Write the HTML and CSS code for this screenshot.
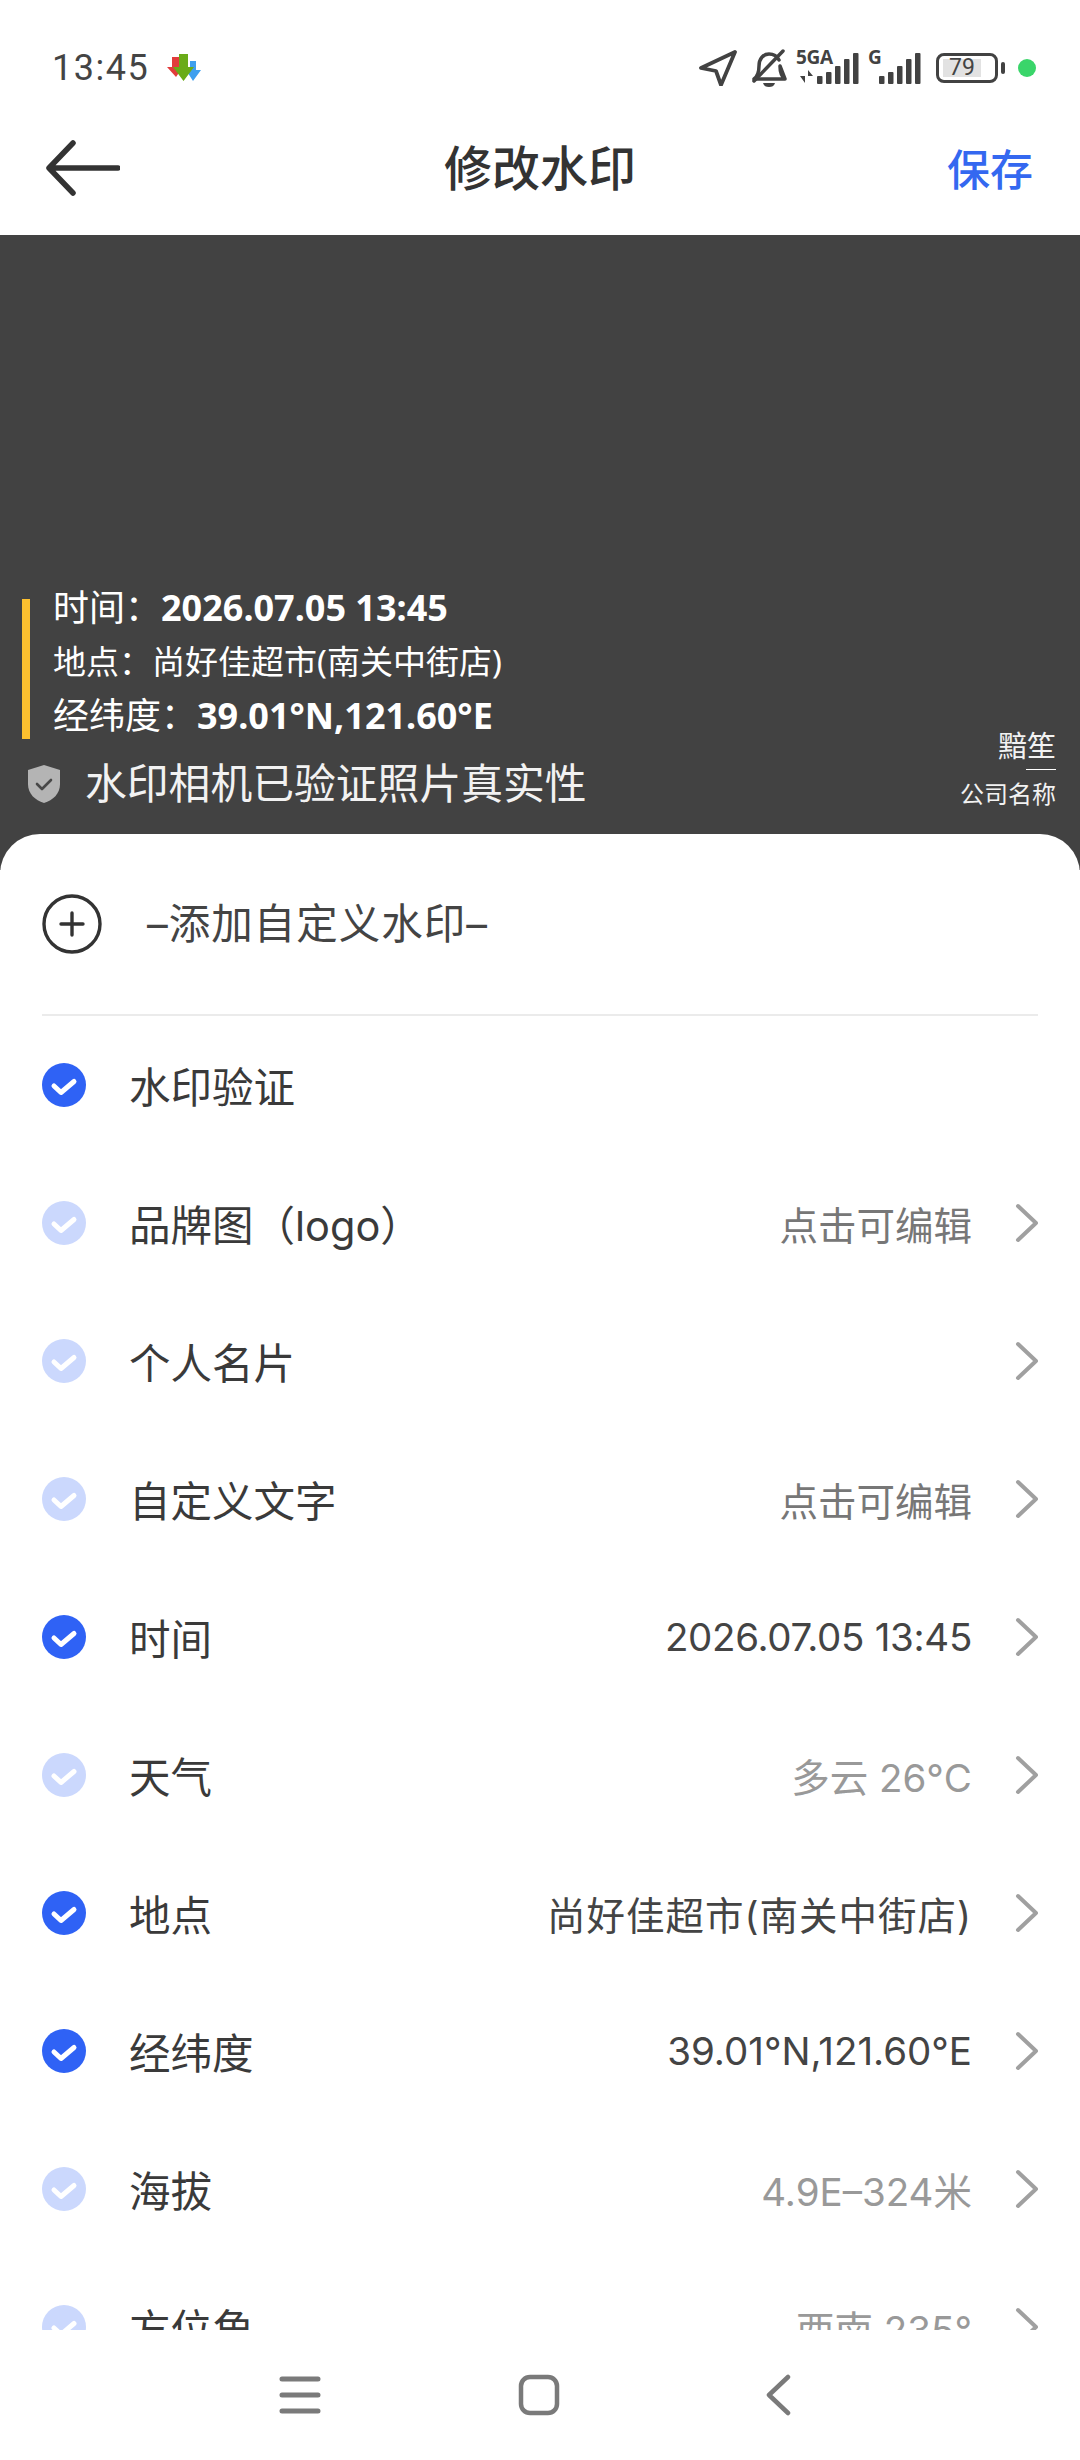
FILE: index.html
```html
<!DOCTYPE html>
<html lang="zh-CN">
<head>
    <meta charset="UTF-8">
    <meta name="viewport" content="width=device-width, initial-scale=1.0">
    <title>修改水印</title>
    <link rel="stylesheet" href="styles.css">
</head>
<body>
    <svg class="defs" width="0" height="0">
        <symbol id="check" viewBox="0 0 44 44">
            <circle cx="22" cy="22" r="22" fill="currentColor"/>
            <path d="M12 23l7 6.500 13-11" fill="none" stroke="#fff" stroke-width="5" stroke-linecap="round" stroke-linejoin="round"/>
        </symbol>
        <symbol id="chevron" viewBox="0 0 24 40">
            <path d="M4 3l18 17-18 17" fill="none" stroke="#a0a0a0" stroke-width="4" stroke-linecap="round" stroke-linejoin="round"/>
        </symbol>
    </svg>

    <div class="page">
        <div class="status-bar">
            <span class="clock">13:45</span>
            <svg class="dl-icon" width="36" height="30" viewBox="0 0 36 30">
                <path d="M6 4h7v10h4l-7 10-9-10h5z" fill="#e23c3c"/>
                <path d="M24 8h6v9h5l-8 11-7-11h4z" fill="#3f9fee"/>
                <path d="M13 1h9v13h6L17.500 28 7 14h6z" fill="#6aab18"/>
            </svg>
            <div class="status-right">
                <svg width="38" height="36" viewBox="0 0 38 36">
                    <path d="M36 2L2 18l15 3 5 14z" fill="none" stroke="#424242" stroke-width="3.800" stroke-linejoin="round"/>
                </svg>
                <svg class="bell" width="36" height="40" viewBox="0 0 36 40">
                    <path d="M3 31c4-3 5-7 5-13 0-7 4-12 10-12 5 0 8 2 10 6M29 18c0 6 1 10 5 13z M3 31h31" fill="none" stroke="#424242" stroke-width="3.500" stroke-linecap="round" stroke-linejoin="round"/>
                    <path d="M12 35h12c-1 3-3 4-6 4s-5-1-6-4z" fill="#424242"/>
                    <path d="M3 33L32 3" stroke="#424242" stroke-width="3.500" stroke-linecap="round"/>
                </svg>
                <div class="signal sim-one">
                    <span class="net-label">5GA</span>
                    <svg width="66" height="36" viewBox="0 0 66 36">
                        <path d="M9 20v13l-5-7h5zM12 33V20l5 6h-5z"/>
                        <rect x="21" y="26" width="5.500" height="8" rx="1"/>
                        <rect x="30" y="22" width="5.500" height="12" rx="1"/>
                        <rect x="39" y="16" width="5.500" height="18" rx="1"/>
                        <rect x="48" y="9" width="5.500" height="25" rx="1"/>
                        <rect x="57" y="3" width="5.500" height="31" rx="1"/>
                    </svg>
                </div>
                <div class="signal sim-two">
                    <span class="net-label">G</span>
                    <svg width="54" height="36" viewBox="0 0 54 36">
                        <rect x="11" y="26" width="5.500" height="8" rx="1"/>
                        <rect x="20" y="22" width="5.500" height="12" rx="1"/>
                        <rect x="29" y="16" width="5.500" height="18" rx="1"/>
                        <rect x="38" y="9" width="5.500" height="25" rx="1"/>
                        <rect x="47" y="3" width="5.500" height="31" rx="1"/>
                    </svg>
                </div>
                <div class="battery">
                    <div class="battery-body"><span class="battery-level">79</span></div>
                    <div class="battery-nub"></div>
                </div>
                <span class="dot"></span>
            </div>
        </div>

        <header class="top-bar">
            <svg class="back" width="74" height="60" viewBox="0 0 74 60">
                <path d="M72 30H4M27 5L3 30l24 25" fill="none" stroke="#333" stroke-width="5.500" stroke-linecap="round" stroke-linejoin="round"/>
            </svg>
            <h1>修改水印</h1>
            <a class="save">保存</a>
        </header>

        <section class="preview">
            <div class="wm-left">
                <div class="wm-lines">
                    <div class="wm-line wm-time">时间：<b>2026.07.05 13:45</b></div>
                    <div class="wm-line wm-place">地点：尚好佳超市(南关中街店)</div>
                    <div class="wm-line wm-time">经纬度：<b>39.01°N,121.60°E</b></div>
                </div>
                <div class="wm-verify">
                    <svg width="34" height="40" viewBox="0 0 34 40">
                        <path d="M17 1l16 5v14c0 10-7 16-16 19C8 36 1 30 1 20V6z" fill="#b4b4b4"/>
                        <path d="M10 20l5 5 9-9" fill="none" stroke="#484848" stroke-width="2.600" stroke-linecap="round" stroke-linejoin="round"/>
                    </svg>
                    <span>水印相机已验证照片真实性</span>
                </div>
            </div>
            <div class="wm-company">
                <div class="wm-name">黯笙</div>
                <div class="wm-rule"></div>
                <div class="wm-company-label">公司名称</div>
            </div>
        </section>

        <main class="sheet">
            <div class="add-row">
                <svg width="60" height="60" viewBox="0 0 60 60">
                    <circle cx="30" cy="30" r="28" fill="none" stroke="#333" stroke-width="3.400"/>
                    <path d="M30 19v22M19 30h22" stroke="#333" stroke-width="3.400" stroke-linecap="round"/>
                </svg>
                <span class="add-text">–添加自定义水印–</span>
            </div>

            <ul class="list">
                <li class="row on">
                    <svg class="tick"><use href="#check"/></svg>
                    <span class="label">水印验证</span>
                </li>
                <li class="row">
                    <svg class="tick"><use href="#check"/></svg>
                    <span class="label">品牌图（logo）</span>
                    <span class="value hint">点击可编辑</span>
                    <svg class="chev"><use href="#chevron"/></svg>
                </li>
                <li class="row">
                    <svg class="tick"><use href="#check"/></svg>
                    <span class="label">个人名片</span>
                    <svg class="chev"><use href="#chevron"/></svg>
                </li>
                <li class="row">
                    <svg class="tick"><use href="#check"/></svg>
                    <span class="label">自定义文字</span>
                    <span class="value hint">点击可编辑</span>
                    <svg class="chev"><use href="#chevron"/></svg>
                </li>
                <li class="row on">
                    <svg class="tick"><use href="#check"/></svg>
                    <span class="label">时间</span>
                    <span class="value tight">2026.07.05 13:45</span>
                    <svg class="chev"><use href="#chevron"/></svg>
                </li>
                <li class="row">
                    <svg class="tick"><use href="#check"/></svg>
                    <span class="label">天气</span>
                    <span class="value">多云 26°C</span>
                    <svg class="chev"><use href="#chevron"/></svg>
                </li>
                <li class="row on">
                    <svg class="tick"><use href="#check"/></svg>
                    <span class="label">地点</span>
                    <span class="value wide">尚好佳超市(南关中街店)</span>
                    <svg class="chev"><use href="#chevron"/></svg>
                </li>
                <li class="row on">
                    <svg class="tick"><use href="#check"/></svg>
                    <span class="label">经纬度</span>
                    <span class="value">39.01°N,121.60°E</span>
                    <svg class="chev"><use href="#chevron"/></svg>
                </li>
                <li class="row">
                    <svg class="tick"><use href="#check"/></svg>
                    <span class="label">海拔</span>
                    <span class="value">4.9E–324米</span>
                    <svg class="chev"><use href="#chevron"/></svg>
                </li>
                <li class="row">
                    <svg class="tick"><use href="#check"/></svg>
                    <span class="label">方位角</span>
                    <span class="value">西南 235°</span>
                    <svg class="chev"><use href="#chevron"/></svg>
                </li>
            </ul>
        </main>

        <nav class="nav-bar">
            <svg width="42" height="40" viewBox="0 0 42 40">
                <path d="M3 4h36M3 20h36M3 36h36" stroke="#7a7a7a" stroke-width="5" stroke-linecap="round"/>
            </svg>
            <svg width="42" height="42" viewBox="0 0 42 42">
                <rect x="3" y="3" width="36" height="36" rx="9" fill="none" stroke="#7a7a7a" stroke-width="4.500"/>
            </svg>
            <svg width="42" height="42" viewBox="-7 0 42 42">
                <path d="M24 3L5 21l19 18" fill="none" stroke="#7a7a7a" stroke-width="4.500" stroke-linecap="round" stroke-linejoin="round"/>
            </svg>
        </nav>
    </div>
</body>
</html>
```

FILE: styles.css
```css
body {
    margin: 0;
    padding: 0;
    background-color: #fff;
    color: #333;
    font-family: Inter, "Noto Sans CJK SC", sans-serif;
}

.defs {
    position: absolute;
}

.page {
    width: 1080px;
    height: 2460px;
    display: flex;
    flex-direction: column;
    overflow: hidden;
}

/* status bar */
.status-bar {
    height: 136px;
    box-sizing: border-box;
    padding: 0 44px 0 52px;
    display: flex;
    align-items: center;
    flex-shrink: 0;
}

.clock {
    font-family: Roboto, sans-serif;
    font-size: 36px;
    letter-spacing: 1.500px;
    color: #444;
}

.dl-icon {
    margin-left: 17px;
}

.status-right {
    margin-left: auto;
    display: flex;
    align-items: center;
}

.bell {
    margin-left: 14px;
}

.signal {
    position: relative;
    height: 36px;
    fill: #424242;
}

.signal svg {
    display: block;
}

.sim-one {
    margin-left: 9px;
}

.sim-two {
    margin-left: 6px;
}

.net-label {
    position: absolute;
    left: 0;
    top: -3px;
    font-family: "Open Sans", sans-serif;
    font-size: 19px;
    line-height: 20px;
    font-weight: 700;
    letter-spacing: -0.300px;
    color: #424242;
}

.battery {
    display: flex;
    align-items: center;
    margin-left: 14px;
}

.battery-body {
    width: 62px;
    height: 30px;
    box-sizing: border-box;
    border: 3px solid #424242;
    border-radius: 8px;
    padding: 3px 14px 3px 4px;
    display: flex;
}

.battery-level {
    flex: 1;
    background-color: #e2e2e2;
    font-family: Roboto, sans-serif;
    font-size: 23px;
    line-height: 18px;
    text-align: center;
    color: #444;
}

.battery-nub {
    width: 4px;
    height: 12px;
    margin-left: 3px;
    background-color: #424242;
    border-radius: 2px;
}

.dot {
    width: 18px;
    height: 18px;
    margin-left: 13px;
    border-radius: 50%;
    background-color: #3ad56a;
}

/* title */
.top-bar {
    height: 99px;
    box-sizing: border-box;
    flex-shrink: 0;
    display: flex;
    align-items: center;
    justify-content: space-between;
    padding: 0 47px 36px 46px;
    position: relative;
}

.top-bar h1 {
    position: absolute;
    left: 0;
    right: 0;
    margin: 0 0 6px;
    text-align: center;
    font-size: 48px;
    font-weight: 500;
    color: #333;
}

.save {
    margin-bottom: 2px;
    font-size: 43px;
    font-weight: 500;
    color: #3468f0;
}

/* watermark preview */
.preview {
    height: 635px;
    flex-shrink: 0;
    box-sizing: border-box;
    background-color: #424242;
    color: #fff;
    padding: 0 24px 61px 22px;
    display: flex;
    align-items: flex-end;
    justify-content: space-between;
}

.wm-lines {
    display: flow-root;
    height: 140px;
    border-left: 8px solid #fdc02f;
    padding-left: 23px;
    font-family: "Noto Sans", "Noto Sans CJK SC", sans-serif;
}

.wm-line {
    height: 54px;
    line-height: 54px;
    white-space: nowrap;
}

.wm-line:first-child {
    margin-top: -18px;
}

.wm-time {
    font-size: 36px;
}

.wm-time b {
    font-weight: 700;
}

.wm-place {
    font-size: 33px;
}

.wm-verify {
    margin-top: 20px;
    margin-left: 5px;
    display: flex;
    align-items: center;
    gap: 24px;
    font-size: 41.800px;
    line-height: 50px;
    color: #f2f2f2;
}

.wm-company {
    display: flex;
    flex-direction: column;
    align-items: flex-end;
    margin-bottom: -6px;
    color: #f2f2f2;
}

.wm-name {
    font-size: 29px;
    line-height: 38px;
}

.wm-rule {
    width: 30px;
    height: 1px;
    margin: 3px 0 5px;
    background-color: #fff;
}

.wm-company-label {
    font-size: 24px;
    line-height: 40px;
}

/* options sheet */
.sheet {
    flex: 1;
    min-height: 0;
    margin-top: -36px;
    overflow: hidden;
    background-color: #fff;
    border-radius: 40px 40px 0 0;
    padding: 0 42px;
}

.add-row {
    height: 182px;
    box-sizing: border-box;
    border-bottom: 2px solid #ebebeb;
    display: flex;
    align-items: center;
}

.add-text {
    margin: 0 0 6px 45px;
    font-size: 41.500px;
    letter-spacing: 1px;
    color: #444;
}

.list {
    list-style: none;
    margin: 0;
    padding: 0;
}

.row {
    height: 138px;
    display: flex;
    align-items: center;
}

.tick {
    width: 44px;
    height: 44px;
    flex-shrink: 0;
    color: #cbd8fd;
}

.row.on .tick {
    color: #2f62f5;
}

.label {
    margin-left: 43px;
    font-size: 41.500px;
    color: #3a3a3a;
}

.value {
    margin-left: auto;
    font-size: 38.500px;
    color: #999;
}

.value.hint {
    color: #777;
}

.value.tight {
    letter-spacing: -0.300px;
}

.value.wide {
    letter-spacing: 1px;
}

.row.on .value {
    color: #444;
}

.chev {
    width: 24px;
    height: 40px;
    margin-left: 42px;
    flex-shrink: 0;
}

.row > .label + .chev {
    margin-left: auto;
}

/* system nav */
.nav-bar {
    height: 130px;
    flex-shrink: 0;
    background-color: #fff;
    display: flex;
    align-items: center;
    justify-content: center;
    gap: 197px;
    padding-right: 2px;
}
```
